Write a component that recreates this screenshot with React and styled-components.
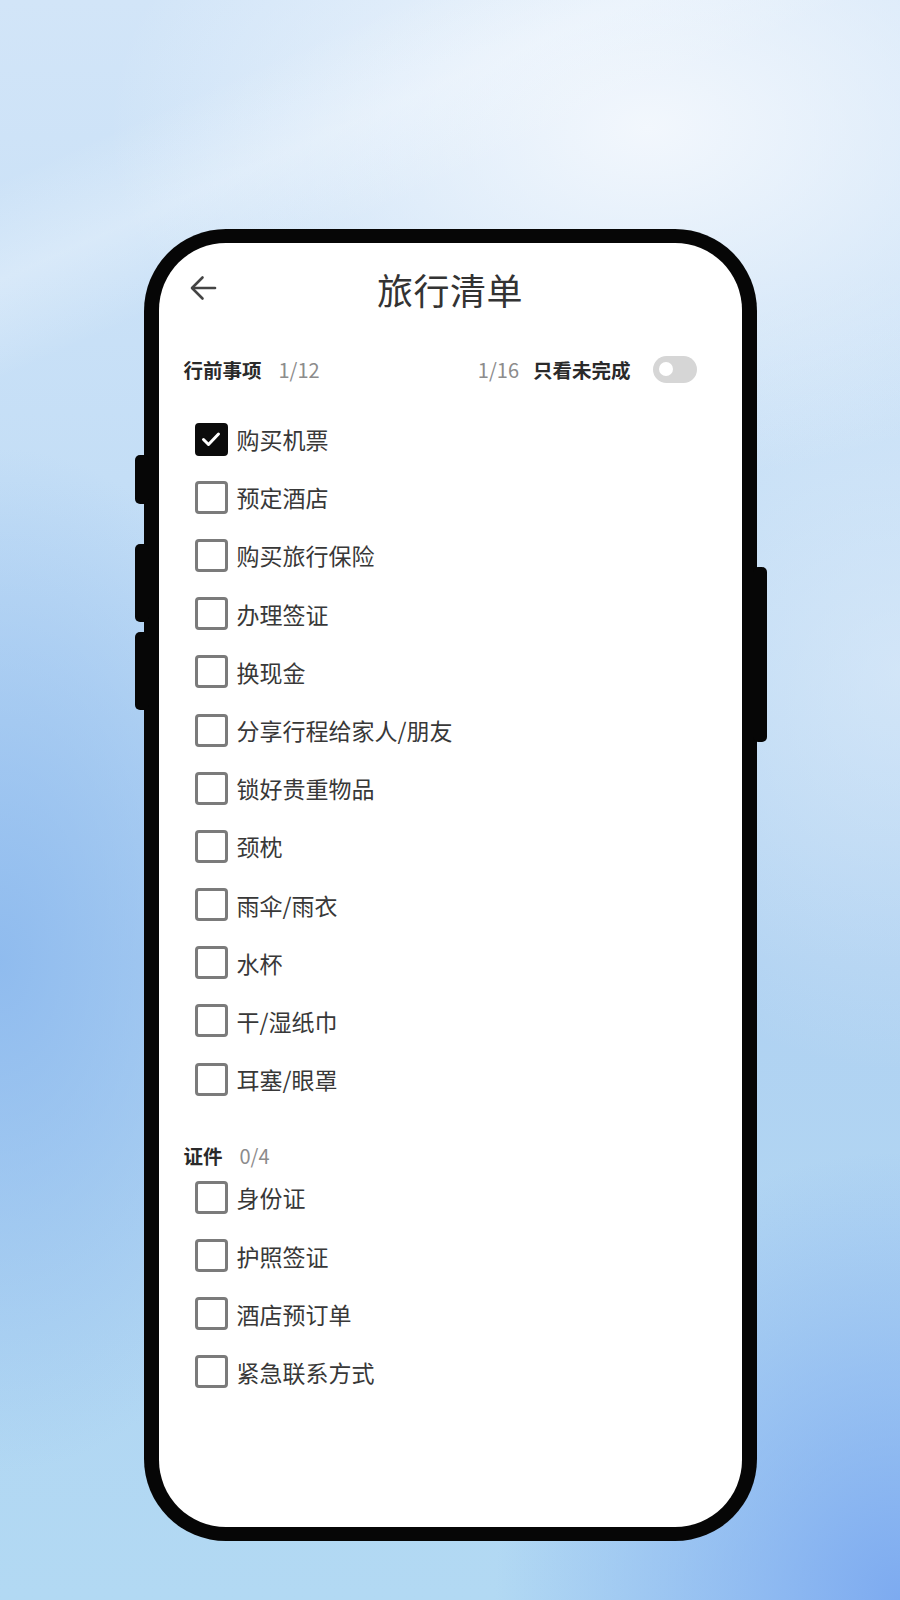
import React from 'react';
import styled, { createGlobalStyle } from 'styled-components';

const GlobalStyle = createGlobalStyle`
  html, body {
    margin: 0;
    padding: 0;
  }
  body {
    font-family: "Noto Sans CJK SC", "Noto Sans", sans-serif;
  }
`;

const Backdrop = styled.div`
  width: 900px;
  height: 1600px;
  overflow: hidden;
  display: flex;
  justify-content: center;
  padding-top: 229px;
  box-sizing: border-box;
  background:
    linear-gradient(156deg, transparent 9%, rgba(248, 251, 254, 0.3) 14%, transparent 19%),
    radial-gradient(ellipse 60% 22% at 72% 8%, rgba(244, 248, 253, 0.95), transparent),
    radial-gradient(ellipse 36% 32% at 0% 60%, rgba(140, 185, 238, 0.9), transparent),
    radial-gradient(ellipse 45% 28% at 100% 100%, rgba(122, 168, 240, 0.95), transparent),
    radial-gradient(ellipse 40% 25% at 100% 42%, rgba(228, 239, 250, 0.55), transparent),
    linear-gradient(180deg, #d2e5f8 0%, #c4def6 30%, #b0d2f2 60%, #b2d9f3 100%);
`;

const Phone = styled.div`
  position: relative;
  width: 613px;
  height: 1312px;
  box-sizing: border-box;
  padding: 14px 15px;
  background: #060606;
  border-radius: 82px;
`;

/* volume / power keys sticking out of the frame */
const SideKey = styled.div`
  position: absolute;
  top: ${p => p.top}px;
  height: ${p => p.h}px;
  width: 14px;
  background: #060606;
  border-radius: 5px;
  ${p => (p.right ? 'right: -10px;' : 'left: -9px;')}
`;

const Screen = styled.div`
  height: 100%;
  background: #ffffff;
  border-radius: 67px;
  overflow: hidden;
  display: flex;
  flex-direction: column;
  padding: 0 25px;
  box-sizing: border-box;
`;

const TopBar = styled.div`
  position: relative;
  height: 48px;
  margin-top: 22px;
  display: flex;
  align-items: center;
  justify-content: center;
`;

const BackButton = styled.div`
  position: absolute;
  left: 5px;
  top: 10px;
  width: 28px;
  height: 26px;
  color: #444;
  display: flex;
`;

const Title = styled.h1`
  margin: 0;
  font-size: 36px;
  font-weight: 400;
  color: #333;
  letter-spacing: 0.5px;
  line-height: 48px;
`;

const SectionHead = styled.div`
  display: flex;
  align-items: center;
  height: 26px;
  margin-top: ${p => p.gap}px;
  padding-right: 20px;
`;

const SectionName = styled.span`
  font-size: 19.5px;
  font-weight: 700;
  color: #2a2a2a;
`;

const Count = styled.span`
  font-size: 20px;
  color: #8c8c8c;
  margin-left: ${p => p.gap || 17}px;
  margin-right: ${p => p.after || 0}px;
`;

const Spacer = styled.div`
  flex: 1;
`;

const Toggle = styled.div`
  width: 44px;
  height: 27px;
  border-radius: 14px;
  background: #d6d6d6;
  margin-left: 22px;
  display: flex;
  align-items: center;
  padding-left: 6px;
  box-sizing: border-box;
`;

const Knob = styled.div`
  width: 14px;
  height: 14px;
  border-radius: 50%;
  background: #fff;
`;

const List = styled.div`
  display: flex;
  flex-direction: column;
  margin-top: ${p => p.gap}px;
  padding-left: 11px;
`;

const Row = styled.div`
  display: flex;
  align-items: center;
  height: 58.2px;
`;

const Box = styled.div`
  width: 33px;
  height: 33px;
  box-sizing: border-box;
  border-radius: 4px;
  border: 3px solid ${p => (p.checked ? '#0b0b0b' : '#7b7b7b')};
  background: ${p => (p.checked ? '#0b0b0b' : '#fff')};
  display: flex;
  align-items: center;
  justify-content: center;
  flex-shrink: 0;
`;

const Label = styled.span`
  margin-left: 9px;
  font-size: 23px;
  color: #383838;
`;

const ArrowLeft = () => (
  <svg width="28" height="26" viewBox="0 0 28 26" fill="none">
    <path d="M26 13H3.5" stroke="currentColor" strokeWidth="2.6" strokeLinecap="round" />
    <path d="M13.5 2.5L3 13l10.5 10.5" stroke="currentColor" strokeWidth="2.6" strokeLinecap="round" strokeLinejoin="round" />
  </svg>
);

const Check = () => (
  <svg width="22" height="22" viewBox="0 0 22 22" fill="none">
    <path d="M3.5 11.5l5 5L18.5 6" stroke="#fff" strokeWidth="3" strokeLinecap="round" strokeLinejoin="round" />
  </svg>
);

const before = [
  { text: '购买机票', done: true },
  { text: '预定酒店' },
  { text: '购买旅行保险' },
  { text: '办理签证' },
  { text: '换现金' },
  { text: '分享行程给家人/朋友' },
  { text: '锁好贵重物品' },
  { text: '颈枕' },
  { text: '雨伞/雨衣' },
  { text: '水杯' },
  { text: '干/湿纸巾' },
  { text: '耳塞/眼罩' },
];

const papers = [
  { text: '身份证' },
  { text: '护照签证' },
  { text: '酒店预订单' },
  { text: '紧急联系方式' },
];

const Checklist = ({ items, gap }) => (
  <List gap={gap}>
    {items.map((item, i) => (
      <Row key={i}>
        <Box checked={item.done}>{item.done && <Check />}</Box>
        <Label>{item.text}</Label>
      </Row>
    ))}
  </List>
);

export default function App() {
  return (
    <>
      <GlobalStyle />
      <Backdrop>
        <Phone>
          <SideKey top={226} h={49} />
          <SideKey top={315} h={78} />
          <SideKey top={403} h={78} />
          <SideKey right top={338} h={175} />
          <Screen>
            <TopBar>
              <BackButton>
                <ArrowLeft />
              </BackButton>
              <Title>旅行清单</Title>
            </TopBar>

            <SectionHead gap={43}>
              <SectionName>行前事项</SectionName>
              <Count>1/12</Count>
              <Spacer />
              <Count after={14}>1/16</Count>
              <SectionName>只看未完成</SectionName>
              <Toggle>
                <Knob />
              </Toggle>
            </SectionHead>
            <Checklist items={before} gap={28} />

            <SectionHead gap={34}>
              <SectionName>证件</SectionName>
              <Count>0/4</Count>
            </SectionHead>
            <Checklist items={papers} gap={0} />
          </Screen>
        </Phone>
      </Backdrop>
    </>
  );
}
